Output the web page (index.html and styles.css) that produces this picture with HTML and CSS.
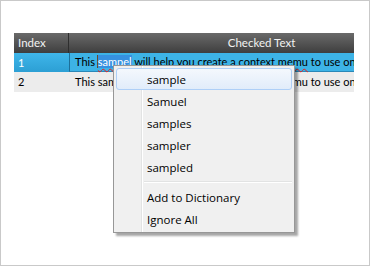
FILE: index.html
```html
<!DOCTYPE html>
<html lang="en">
<head>
  <meta charset="UTF-8" />
  <title>Spell Check Grid</title>
  <link rel="stylesheet" href="styles.css">
</head>
<body>

  <div class="frame">
    <div class="grid">
      <div class="row head">
        <div class="c-idx">Index</div>
        <div class="c-text">Checked Text</div>
      </div>
      <div class="row sel">
        <div class="c-idx">1</div>
        <div class="c-text edit">This <span class="hl err">sampel</span> will help you create a context <span class="err">memu</span> to use on a grid cell</div>
      </div>
      <div class="row">
        <div class="c-idx">2</div>
        <div class="c-text">This sample will help you create a context memu to use on a grid cell</div>
      </div>
    </div>

    <!-- spell check context menu -->
    <div class="menu">
      <div class="item active">sample</div>
      <div class="item">Samuel</div>
      <div class="item">samples</div>
      <div class="item">sampler</div>
      <div class="item">sampled</div>
      <div class="sep"></div>
      <div class="item">Add to Dictionary</div>
      <div class="item">Ignore All</div>
    </div>
  </div>

</body>
</html>
```

FILE: styles.css
```css
body {
  margin: 0;
  background: #fff;
  font-family: 'Lato', sans-serif;
}

.frame {
  position: relative;
  width: 370px;
  height: 266px;
  box-sizing: border-box;
  border: 1px solid #c9c9c9;
  padding: 32px 0 0 13px;
}

.grid {
  width: 340px;
  overflow: hidden;
  background: #fff;
}

.row {
  display: flex;
  height: 20px;
  font-size: 11px;
  line-height: 20px;
  white-space: nowrap;
  background: #ececec;
  color: #000;
}

.c-idx {
  flex: 0 0 55px;
  padding-left: 4px;
  box-sizing: border-box;
}

.c-text {
  flex: 0 0 385px;
  padding-left: 6px;
  box-sizing: border-box;
}

.head {
  background: linear-gradient(#6a6a6a, #3e3e3e);
  color: #f2f2f2;
  font-size: 11.5px;
}

.head .c-idx {
  border-right: 1px solid #2e2e2e;
}

.head .c-text {
  text-align: center;
  padding-left: 0;
}

.sel {
  height: 19px;
  line-height: 19px;
  background: #3db3e6;
}

.sel .c-idx {
  color: #fff;
  background: linear-gradient(#3fb6ea, #2c9fd4);
}

.sel .edit {
  border-left: 1px solid #1d6f99;
  border-bottom: 1px solid #2a88b8;
  padding-left: 5px;
  line-height: 18px;
}

.hl {
  background: #3691e0;
  color: #fff;
  box-shadow: -1px 0 0 #6b4a2a;
}

.err {
  text-decoration: underline wavy #e81e1e;
  text-decoration-thickness: 1px;
  text-underline-offset: 2px;
}

.menu {
  position: absolute;
  left: 112px;
  top: 64px;
  width: 182px;
  padding: 2px;
  box-sizing: border-box;
  background: #f0f0f0 linear-gradient(90deg, transparent 27px, #e2e3e3 27px, #e2e3e3 28px, #fff 28px, #fff 29px, transparent 29px);
  border: 1px solid #979797;
  box-shadow: 3px 3px 2px rgba(0, 0, 0, 0.35);
  font-family: 'Open Sans', sans-serif;
  font-size: 11.5px;
  color: #000;
}

.item {
  height: 22px;
  line-height: 21px;
  padding-left: 30px;
  border: 1px solid transparent;
  border-radius: 3px;
  box-sizing: border-box;
}

.item.active {
  border-color: #aecff7;
  background: linear-gradient(#f4f8fd, #e1ecfa);
}

.sep {
  height: 8px;
  margin-left: 28px;
  background: linear-gradient(transparent 3px, #e2e3e3 3px, #e2e3e3 4px, #fff 4px, #fff 5px, transparent 5px);
}
```
